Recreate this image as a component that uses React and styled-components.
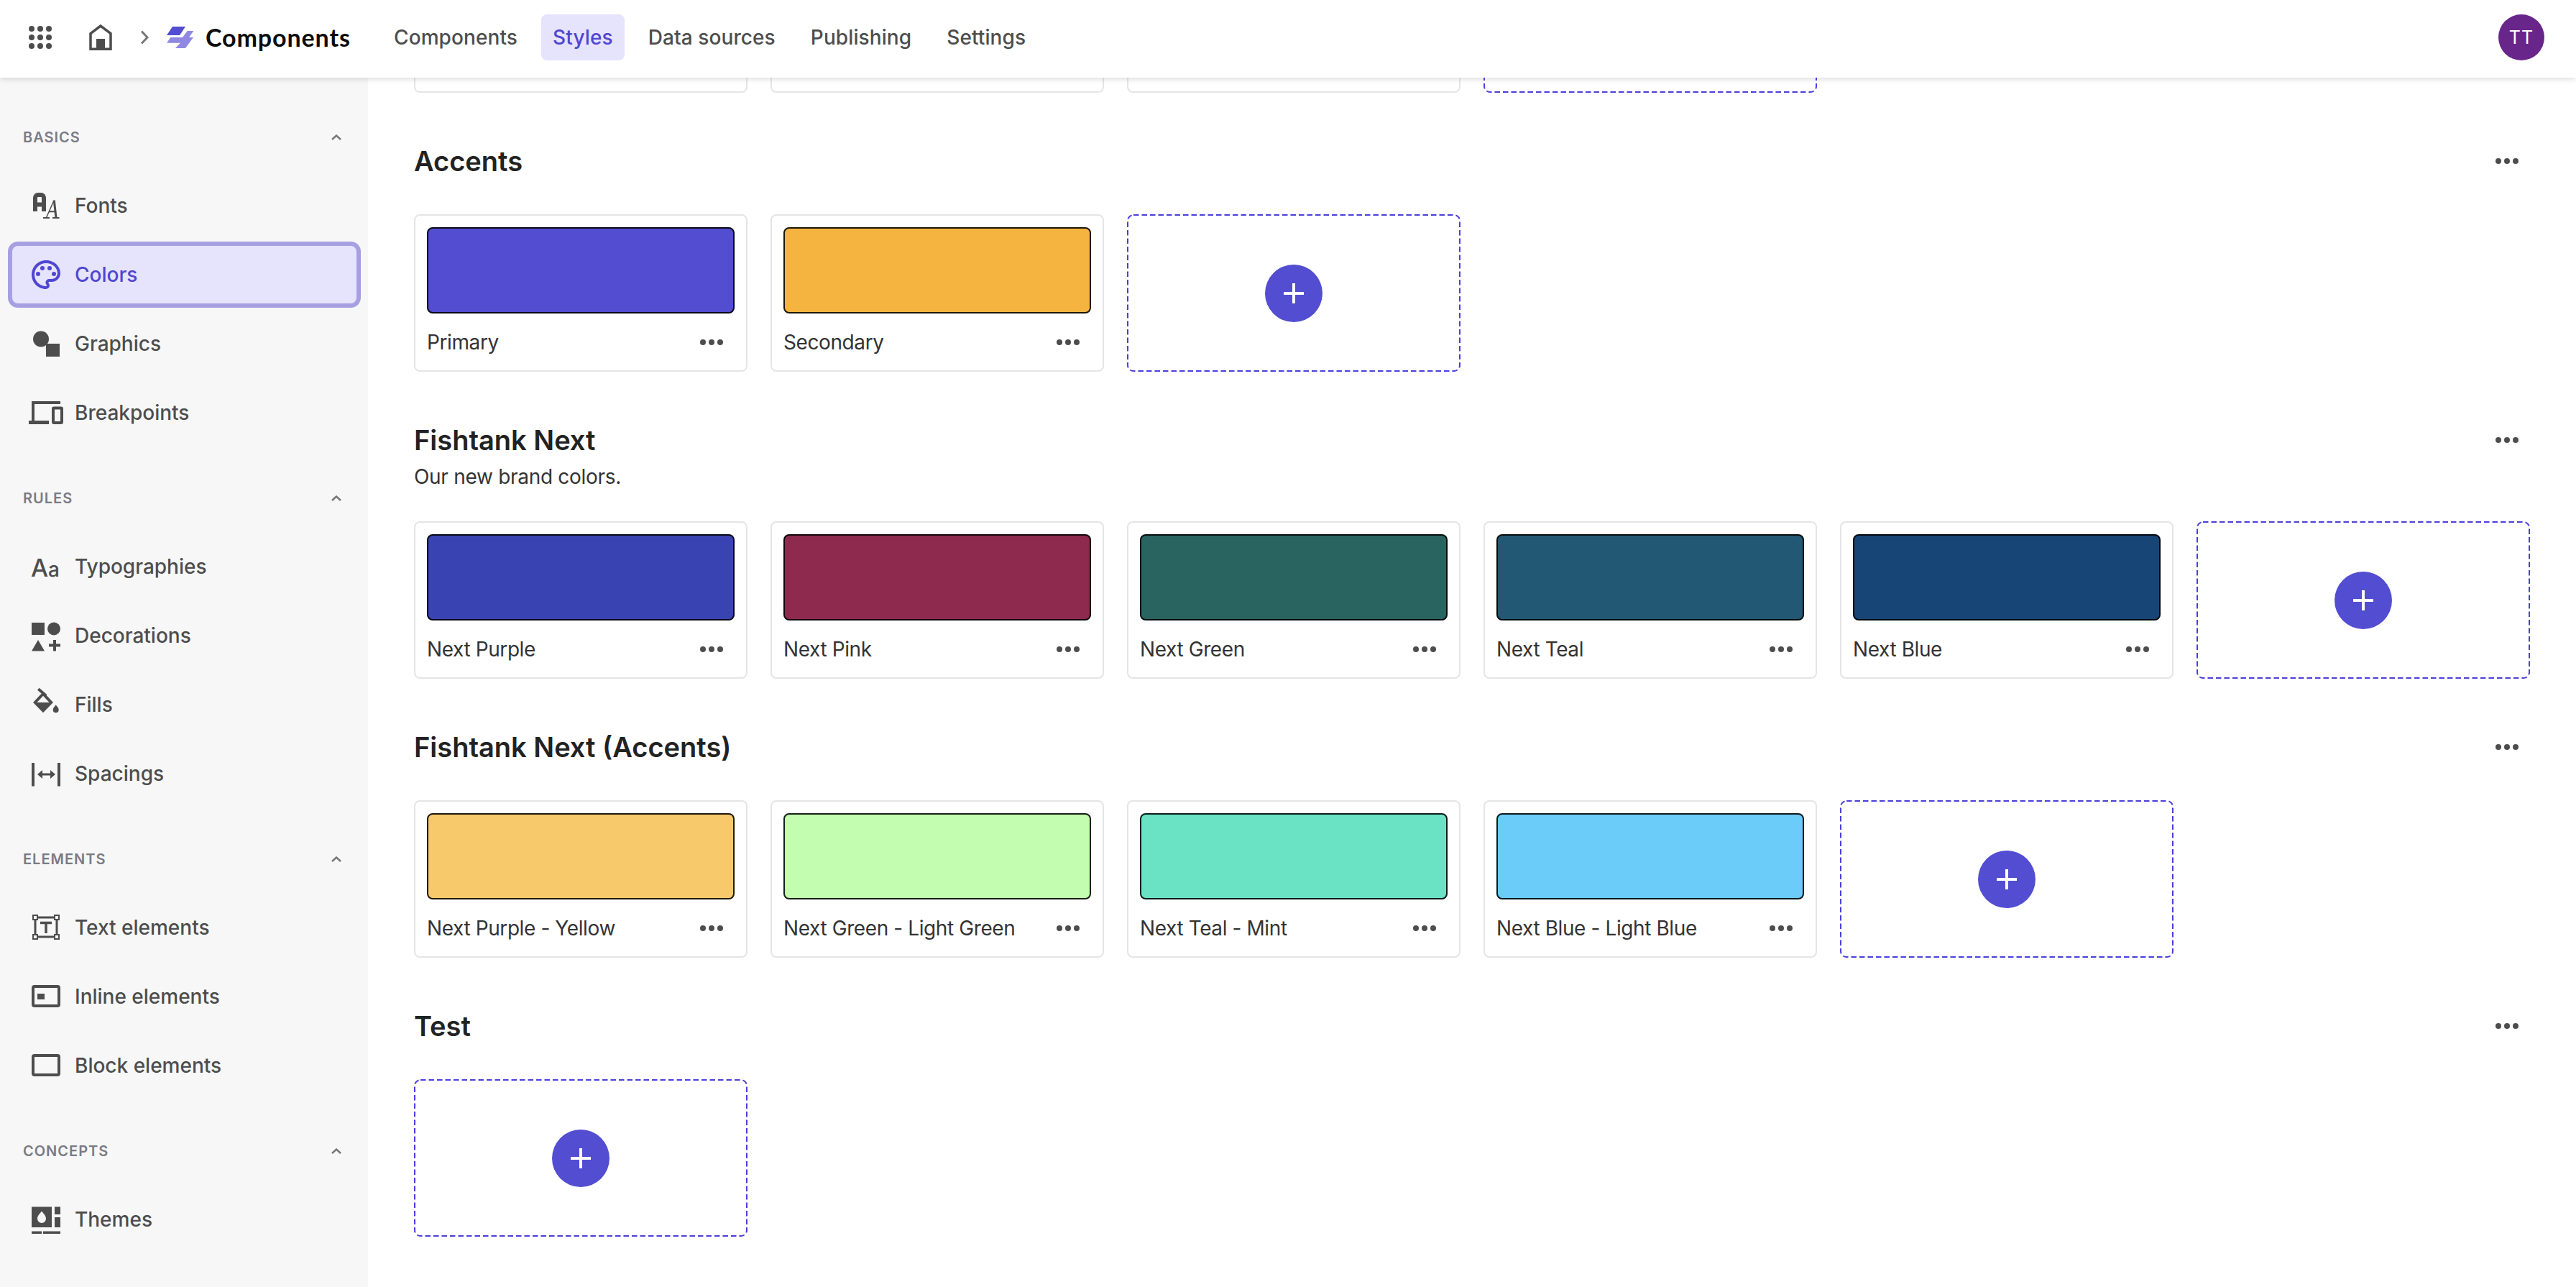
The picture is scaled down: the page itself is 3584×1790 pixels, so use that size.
import React from 'react';
import styled, { createGlobalStyle } from 'styled-components';
import { MdOutlinePalette } from 'react-icons/md';

const GlobalStyle = createGlobalStyle`
  html, body {
    margin: 0;
    padding: 0;
    background: #fff;
  }

  body {
    font-family: Inter, "Liberation Sans", sans-serif;
    -webkit-font-smoothing: antialiased;
  }
`;

const Page = styled.div`
  display: flex;
  flex-direction: column;
  width: 3584px;
  height: 1790px;
  overflow: hidden;
`;

const TopBar = styled.header`
  position: relative;
  z-index: 2;
  display: flex;
  align-items: center;
  flex: 0 0 108px;
  box-sizing: border-box;
  padding: 0 44px 4px 40px;
  background: #fff;
  box-shadow: 0 2px 8px rgba(0, 0, 0, 0.14);
`;

const AppsIcon = styled.svg`
  width: 32px;
  height: 32px;
  margin-right: 52px;
  fill: #4d4d4d;
`;

const HomeIcon = styled.svg`
  width: 32px;
  height: 36px;
  margin-right: 39px;
`;

const Crumb = styled.svg`
  width: 12px;
  height: 20px;
  margin-right: 25px;
`;

const Logo = styled.svg`
  width: 38px;
  height: 30px;
  margin-right: 16px;
`;

const AppName = styled.div`
  width: 201px;
  margin-right: 45px;
  font-family: Lato, sans-serif;
  font-size: 34px;
  font-weight: 700;
  letter-spacing: 0.9px;
  line-height: 40px;
  color: #0c0c0c;
  white-space: nowrap;
`;

const TopNav = styled.nav`
  display: flex;
  gap: 17px;
`;

const TopLink = styled.a`
  display: flex;
  align-items: center;
  height: 64px;
  padding: 0 16px;
  border-radius: 8px;
  font-size: 28px;
  font-weight: 500;
  letter-spacing: 0.1px;
  color: ${p => (p.$active ? '#4f46d1' : '#4d4d4d')};
  background: ${p => (p.$active ? '#e6e3fc' : 'transparent')};
`;

const Avatar = styled.div`
  display: flex;
  align-items: center;
  justify-content: center;
  width: 64px;
  height: 64px;
  margin-left: auto;
  border-radius: 50%;
  background: #69268a;
  color: #fff;
  font-size: 25px;
  letter-spacing: 1px;
`;

const Body = styled.div`
  display: flex;
  flex: 1;
  min-height: 0;
`;

const Sidebar = styled.aside`
  flex: 0 0 512px;
  padding: 71px 10px 0 11px;
  box-sizing: border-box;
  background: #f7f7f7;
`;

const Group = styled.div`
  margin-bottom: 61px;
`;

const GroupHead = styled.div`
  display: flex;
  align-items: center;
  justify-content: space-between;
  height: 24px;
  margin-bottom: 37px;
  padding: 0 27px 0 21px;
`;

const GroupLabel = styled.span`
  font-size: 20px;
  font-weight: 600;
  letter-spacing: 1px;
  color: #7b7b85;
`;

const GroupChevron = styled.svg`
  width: 14px;
  height: 8px;
`;

const Item = styled.a`
  display: flex;
  align-items: center;
  gap: 16px;
  box-sizing: border-box;
  height: 92px;
  margin-bottom: 4px;
  padding-left: 23px;
  border: 6px solid ${p => (p.$active ? '#a6a0e3' : 'transparent')};
  border-radius: 14px;
  background: ${p => (p.$active ? '#e6e3fc' : 'transparent')};
  font-size: 28px;
  font-weight: 500;
  color: ${p => (p.$active ? '#4f46d1' : '#4d4d4d')};

  svg {
    flex: none;
    width: 48px;
    height: 48px;
  }
`;

const Main = styled.main`
  flex: 1;
  min-width: 0;
  padding: 0 64px;
  overflow: hidden;
`;

const ScrolledOff = styled.div`
  margin-top: -198px;
`;

const Section = styled.section`
  padding-top: 71px;
`;

const SectionHead = styled.div`
  margin-bottom: 50px;
`;

const TitleRow = styled.div`
  display: flex;
  align-items: center;
  justify-content: space-between;
  height: 48px;
  padding-right: 16px;
`;

const Title = styled.h2`
  margin: 0;
  font-size: 38px;
  font-weight: 600;
  line-height: 48px;
  color: #222;
`;

const Subtitle = styled.p`
  margin: 15px 0 0;
  font-size: 28px;
  letter-spacing: -0.3px;
  line-height: 24px;
  color: #333;
`;

const Cards = styled.div`
  display: grid;
  grid-template-columns: repeat(6, 464px);
  gap: 32px;
`;

const Card = styled.div`
  display: flex;
  flex-direction: column;
  box-sizing: border-box;
  height: 219px;
  padding: 16px 16px 0;
  border: 2px solid #e5e5e5;
  border-radius: 8px;
  background: #fff;
`;

const Swatch = styled.div`
  flex: 0 0 120px;
  box-sizing: border-box;
  border: 2px solid rgba(0, 0, 0, 0.88);
  border-radius: 8px;
  background: ${p => p.$color};
`;

const CardFoot = styled.div`
  display: flex;
  align-items: center;
  justify-content: space-between;
  flex: 1;
  padding-right: 16px;
  font-size: 28px;
  letter-spacing: -0.4px;
  color: #333;
`;

const MoreIcon = styled.svg`
  width: 32px;
  height: 8px;
  fill: #4d4d4d;
`;

const AddCard = styled.div`
  position: relative;
  display: flex;
  align-items: center;
  justify-content: center;
  height: 219px;
  background: #fff;
`;

const DashedEdge = styled.svg`
  position: absolute;
  inset: 0;
  width: 100%;
  height: 100%;
`;

const AddButton = styled.div`
  display: flex;
  align-items: center;
  justify-content: center;
  width: 80px;
  height: 80px;
  border-radius: 50%;
  background: #524dd1;
`;

const PlusIcon = styled.svg`
  width: 28px;
  height: 28px;
`;

const ICON = '#4d4d4d';

const Apps = () => (
  <AppsIcon viewBox="0 0 32 32">
    {[4, 16, 28].map(y =>
      [4, 16, 28].map(x => <circle key={`${x}-${y}`} cx={x} cy={y} r="4" />)
    )}
  </AppsIcon>
);

const More = () => (
  <MoreIcon viewBox="0 0 32 8">
    <circle cx="4" cy="4" r="4" />
    <circle cx="16" cy="4" r="4" />
    <circle cx="28" cy="4" r="4" />
  </MoreIcon>
);

const FontsIcon = () => (
  <svg viewBox="0 0 48 48">
    <path d="M9 32V13a4 4 0 0 1 4-4h4a4 4 0 0 1 4 4v19M9 22.500h12" fill="none" stroke={ICON} strokeWidth="6" />
    <path d="M24.300 41L35 17" fill="none" stroke={ICON} strokeWidth="1.500" />
    <path d="M35.300 16.500L38 41" fill="none" stroke={ICON} strokeWidth="3" />
    <path d="M20 41h9M33 41h9.500M28 32.300h10" fill="none" stroke={ICON} strokeWidth="2" />
  </svg>
);

const GraphicsIcon = () => (
  <svg viewBox="0 0 48 48" fill={ICON}>
    <circle cx="17" cy="17.500" r="11" />
    <rect x="24" y="24" width="19" height="18" />
  </svg>
);

const BreakpointsIcon = () => (
  <svg viewBox="0 0 48 48">
    <path d="M44 10H6v26" fill="none" stroke={ICON} strokeWidth="4" />
    <rect x="0" y="35" width="28" height="5" fill={ICON} />
    <rect x="34" y="17.500" width="12" height="20.500" rx="1" fill="none" stroke={ICON} strokeWidth="4" />
  </svg>
);

const TypeIcon = () => (
  <svg viewBox="0 0 48 48">
    <text x="3" y="38" fontFamily="Inter, sans-serif" fontSize="34" fontWeight="500" fill={ICON}>A</text>
    <text x="27" y="38" fontFamily="Inter, sans-serif" fontSize="28" fontWeight="500" fill={ICON}>a</text>
  </svg>
);

const DecorationsIcon = () => (
  <svg viewBox="0 0 48 48" fill={ICON}>
    <rect x="4" y="6" width="18" height="17" />
    <circle cx="35" cy="14.500" r="9" />
    <path d="M13 30l9 15.500H4z" />
    <path d="M34 30h4v5.500h6v4h-6V45.500h-4v-6h-6v-4h6z" />
  </svg>
);

const FillsIcon = () => (
  <svg viewBox="0 0 48 48">
    <path d="M13.300 2.300L24 11.500" fill="none" stroke={ICON} strokeWidth="4" />
    <path d="M20 9L8.800 21 20 32.500 31.200 21z" fill="none" stroke={ICON} strokeWidth="4" />
    <path d="M8 21h24L20 33z" fill={ICON} />
    <path d="M37.700 24.300c2 2.800 4 4.500 4 7a4 4 0 0 1-8 0c0-2.500 2-4.200 4-7z" fill={ICON} />
  </svg>
);

const SpacingsIcon = () => (
  <svg viewBox="0 0 48 48" fill={ICON}>
    <rect x="4" y="9" width="4" height="32.500" />
    <rect x="40" y="9" width="4" height="32.500" />
    <rect x="16" y="23.500" width="16" height="3" />
    <path d="M12 25l7-6v12zM37 25l-7-6v12z" />
  </svg>
);

const TextElementsIcon = () => (
  <svg viewBox="0 0 48 48">
    <rect x="9" y="10" width="30" height="27" fill="none" stroke={ICON} strokeWidth="3" />
    {[[9, 10], [39, 10], [9, 37], [39, 37]].map(([x, y]) => (
      <rect key={`${x}-${y}`} x={x - 3} y={y - 3} width="6" height="6" fill="#f7f7f7" stroke={ICON} strokeWidth="2" />
    ))}
    <path d="M16 17.500h16M24 17.500V32" fill="none" stroke={ICON} strokeWidth="3.500" />
  </svg>
);

const InlineIcon = () => (
  <svg viewBox="0 0 48 48">
    <rect x="6" y="10" width="36" height="27" rx="2" fill="none" stroke={ICON} strokeWidth="4" />
    <rect x="12" y="20" width="10" height="8" fill={ICON} />
  </svg>
);

const BlockIcon = () => (
  <svg viewBox="0 0 48 48">
    <rect x="6" y="10" width="36" height="27" rx="2" fill="none" stroke={ICON} strokeWidth="4" />
  </svg>
);

const ThemesIcon = () => (
  <svg viewBox="0 0 48 48" fill={ICON}>
    <rect x="4" y="6.500" width="28" height="28.500" />
    <rect x="36" y="6.500" width="8" height="10.500" />
    <rect x="36" y="21" width="8" height="14" />
    <rect x="4" y="40.500" width="14" height="3.500" />
    <rect x="20" y="40.500" width="24" height="3.500" />
    <path d="M18 12.500c3 4 6 6.500 6 10.500a6 6 0 0 1-12 0c0-4 3-6.500 6-10.500z" fill="#f7f7f7" />
  </svg>
);

const groups = [
  {
    label: 'BASICS',
    items: [
      { name: 'Fonts', icon: <FontsIcon /> },
      { name: 'Colors', icon: <MdOutlinePalette color="#4f46d1" />, active: true },
      { name: 'Graphics', icon: <GraphicsIcon /> },
      { name: 'Breakpoints', icon: <BreakpointsIcon /> },
    ],
  },
  {
    label: 'RULES',
    items: [
      { name: 'Typographies', icon: <TypeIcon /> },
      { name: 'Decorations', icon: <DecorationsIcon /> },
      { name: 'Fills', icon: <FillsIcon /> },
      { name: 'Spacings', icon: <SpacingsIcon /> },
    ],
  },
  {
    label: 'ELEMENTS',
    items: [
      { name: 'Text elements', icon: <TextElementsIcon /> },
      { name: 'Inline elements', icon: <InlineIcon /> },
      { name: 'Block elements', icon: <BlockIcon /> },
    ],
  },
  {
    label: 'CONCEPTS',
    items: [{ name: 'Themes', icon: <ThemesIcon /> }],
  },
];

const sections = [
  {
    title: 'Accents',
    colors: [
      ['Primary', '#524dd1'],
      ['Secondary', '#f4b43f'],
    ],
  },
  {
    title: 'Fishtank Next',
    subtitle: 'Our new brand colors.',
    colors: [
      ['Next Purple', '#3a43b2'],
      ['Next Pink', '#8e2a4e'],
      ['Next Green', '#2a6460'],
      ['Next Teal', '#235874'],
      ['Next Blue', '#174676'],
    ],
  },
  {
    title: 'Fishtank Next (Accents)',
    colors: [
      ['Next Purple - Yellow', '#f8c96b'],
      ['Next Green - Light Green', '#c2fdb0'],
      ['Next Teal - Mint', '#6ae3c5'],
      ['Next Blue - Light Blue', '#6bcbf9'],
    ],
  },
  { title: 'Test', colors: [] },
];

const AddTile = ({ empty }) => (
  <AddCard>
    <DashedEdge viewBox="0 0 464 219">
      <rect x="1" y="1" width="462" height="217" rx="8" fill="none" stroke="#4a3fdc" strokeWidth="2" strokeDasharray="7.500 4" />
    </DashedEdge>
    {!empty && (
      <AddButton>
        <PlusIcon viewBox="0 0 28 28">
          <path d="M14 0v28M0 14h28" stroke="#fff" strokeWidth="4" />
        </PlusIcon>
      </AddButton>
    )}
  </AddCard>
);

const App = () => {
  return (
    <Page>
      <GlobalStyle />
      <TopBar>
        <Apps />
        <HomeIcon viewBox="0 0 32 36">
          <path d="M16 2L2 12.500V34.300h28V12.500z" fill="none" stroke={ICON} strokeWidth="3.500" />
          <rect x="10" y="20" width="12" height="16" fill={ICON} />
        </HomeIcon>
        <Crumb viewBox="0 0 12 20">
          <path d="M2 1.500L10 10l-8 8.500" fill="none" stroke="#777" strokeWidth="3" />
        </Crumb>
        <Logo viewBox="0 0 38 30">
          <path d="M8 0h18l-8 12H0z" fill="#524dd1" />
          <path d="M28.700 6H37.300L31 15h6L26 30H12l7-7.300H0L5.300 15H22z" fill="#9089e3" />
        </Logo>
        <AppName>Components</AppName>
        <TopNav>
          <TopLink>Components</TopLink>
          <TopLink $active>Styles</TopLink>
          <TopLink>Data sources</TopLink>
          <TopLink>Publishing</TopLink>
          <TopLink>Settings</TopLink>
        </TopNav>
        <Avatar>TT</Avatar>
      </TopBar>
      <Body>
        <Sidebar>
          {groups.map(group => (
            <Group key={group.label}>
              <GroupHead>
                <GroupLabel>{group.label}</GroupLabel>
                <GroupChevron viewBox="0 0 14 8">
                  <path d="M1 7l6-5.500L13 7" fill="none" stroke="#777" strokeWidth="2.500" />
                </GroupChevron>
              </GroupHead>
              {group.items.map(item => (
                <Item key={item.name} $active={item.active}>
                  {item.icon}
                  {item.name}
                </Item>
              ))}
            </Group>
          ))}
        </Sidebar>
        <Main>
          <ScrolledOff>
            <Cards>
              <Card />
              <Card />
              <Card />
              <AddTile empty />
            </Cards>
          </ScrolledOff>
          {sections.map(section => (
            <Section key={section.title}>
              <SectionHead>
                <TitleRow>
                  <Title>{section.title}</Title>
                  <More />
                </TitleRow>
                {section.subtitle && <Subtitle>{section.subtitle}</Subtitle>}
              </SectionHead>
              <Cards>
                {section.colors.map(([name, color]) => (
                  <Card key={name}>
                    <Swatch $color={color} />
                    <CardFoot>
                      {name}
                      <More />
                    </CardFoot>
                  </Card>
                ))}
                <AddTile />
              </Cards>
            </Section>
          ))}
        </Main>
      </Body>
    </Page>
  );
};

export default App;
